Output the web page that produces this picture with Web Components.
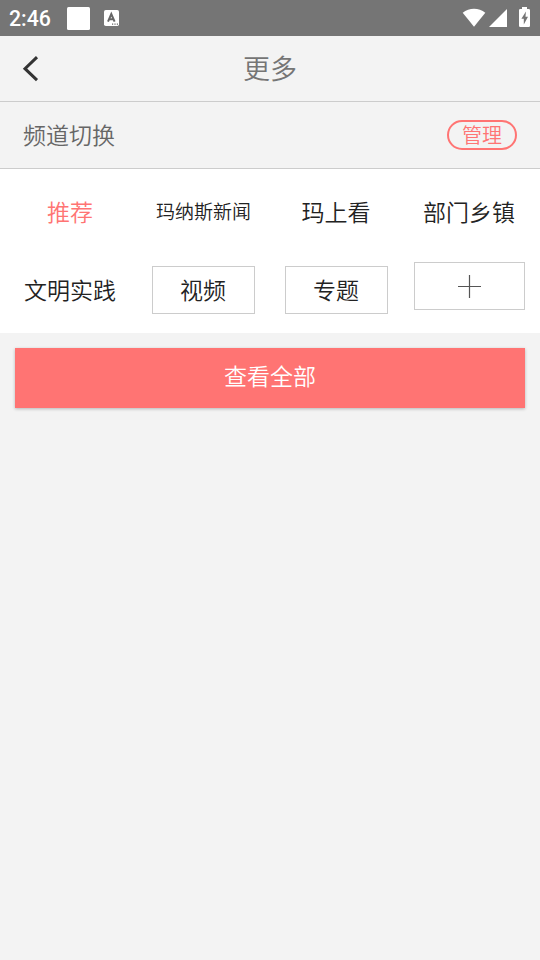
<!DOCTYPE html>
<html lang="zh-CN">
<head>
<meta charset="utf-8">
<title>更多</title>
<style>
html,body{margin:0;height:100%;background:#f3f3f3}
body{font-family:"Noto Sans CJK SC DemiLight","Noto Sans CJK SC",sans-serif;font-weight:350;overflow:hidden}
</style>
</head>
<body>
<more-page></more-page>
<script>
const define = (name, markup) => {
  const template = document.createElement('template');
  template.innerHTML = '<style>*{box-sizing:border-box}:host{box-sizing:border-box}</style>' + markup;
  customElements.define(name, class extends HTMLElement {
    constructor() {
      super();
      this.attachShadow({ mode: 'open' }).appendChild(template.content.cloneNode(true));
    }
  });
};

define('status-bar', `
<style>
:host{display:flex;align-items:center;height:36px;background:#757575;color:#fff;padding:0 9px}
.time{font:500 21.3px/36px Roboto,sans-serif;width:58px;padding-top:1px;white-space:nowrap}
svg{display:block;flex:none}
.note{margin-left:14px}
.wifi{margin-left:auto}
.signal{margin-left:3px}
.battery{margin:0 1px 2px 12px}
</style>
<span class="time">2:46</span>
<svg width="23" height="23" viewBox="0 0 23 23"><rect width="23" height="23" rx="1.5" fill="#fff"/></svg>
<svg class="note" width="15" height="16" viewBox="0 0 15 16"><rect width="15" height="16" rx="1.8" fill="#fff"/><path d="M4 11.6 7.3 4l3.3 7.6M5.3 9.2h4" fill="none" stroke="#666" stroke-width="2"/><path d="M8 14.2h1.2M10.4 14.2h1.2M12.8 14.2H14" stroke="#666" stroke-width="1.3"/></svg>
<svg class="wifi" width="24" height="20" viewBox="0 0 24 20"><path d="M.7 4.8C7.2-.6 16.8-.6 23.3 4.8L12 18.7Z" fill="#fff"/></svg>
<svg class="signal" width="18" height="18" viewBox="0 0 18 18"><path d="M18 0V18H0Z" fill="#fff"/></svg>
<svg class="battery" width="11" height="20" viewBox="0 0 11 20"><path d="M3 0H8V2H9.7Q11 2 11 3.3V18.7Q11 20 9.7 20H1.3Q0 20 0 18.7V3.3Q0 2 1.3 2H3Z" fill="#fff"/><path d="M6.9 4.5 2.4 11.8H4.8V17.5L9 9.8H6.5Z" fill="#757575"/></svg>`);

define('nav-bar', `
<style>
:host{display:grid;grid-template-columns:60px 1fr 60px;align-items:center;height:66px;border-bottom:1px solid #ccc;color:#757575}
svg{display:block;margin-left:22px}
.title{text-align:center;font-size:27px;line-height:40px;padding-bottom:2px}
</style>
<svg width="18" height="26" viewBox="0 0 18 26"><path d="M15 1.2 3 12.7 15 24.2" fill="none" stroke="#333" stroke-width="3"/></svg>
<span class="title"><slot></slot></span>`);

define('section-bar', `
<style>
:host{display:flex;align-items:center;justify-content:space-between;height:67px;border-bottom:1px solid #ccc;padding:0 23px;color:#666;font-size:23px;line-height:34px}
.label{padding-bottom:2px}
</style>
<span class="label"><slot></slot></span><slot name="action"></slot>`);

define('pill-button', `
<style>
:host{display:flex;align-items:center;justify-content:center;width:70px;height:30px;border:2px solid #ff7473;border-radius:15px;color:#ff7473;font-size:20px;line-height:26px;margin-bottom:1px}
</style><slot></slot>`);

define('channel-grid', `
<style>
:host{display:grid;grid-template-columns:repeat(4,133px);grid-template-rows:78px 78px;padding:4px 0 4px 4px;height:164px;background:#fff;align-items:center;justify-items:center;justify-content:start}
</style><slot></slot>`);

define('channel-item', `
<style>
:host{display:flex;align-items:center;justify-content:center;width:103px;height:48px;border:1px solid transparent;color:#222;font-size:23px;line-height:34px;white-space:nowrap;padding:0 1px 2px 0}
:host([active]){color:#ff7473}
:host([small]){font-size:19px;padding-right:0}
:host([boxed]){border-color:#ccc}
:host([add]){width:111px;border-color:#ccc;margin-bottom:8px;padding:0}
svg{display:block}
</style><slot></slot>`);

define('plus-icon', `
<style>:host{display:block}svg{display:block}</style>
<svg width="23" height="23" viewBox="0 0 23 23"><path d="M11.5 0V23M0 11.5H23" stroke="#555" stroke-width="1.2"/></svg>`);

define('wide-button', `
<style>
:host{display:flex;align-items:center;justify-content:center;height:60px;margin:15px;background:#ff7473;color:#fff;font-size:23px;line-height:34px;padding-bottom:6px;box-shadow:0 1px 3px rgba(0,0,0,.25)}
</style><slot></slot>`);

define('more-page', `
<style>:host{display:flex;flex-direction:column;height:960px;width:540px;background:#f3f3f3}</style>
<status-bar></status-bar>
<nav-bar>更多</nav-bar>
<section-bar>频道切换<pill-button slot="action">管理</pill-button></section-bar>
<channel-grid>
<channel-item active>推荐</channel-item>
<channel-item small>玛纳斯新闻</channel-item>
<channel-item>玛上看</channel-item>
<channel-item>部门乡镇</channel-item>
<channel-item>文明实践</channel-item>
<channel-item boxed>视频</channel-item>
<channel-item boxed>专题</channel-item>
<channel-item add><plus-icon></plus-icon></channel-item>
</channel-grid>
<wide-button>查看全部</wide-button>`);
</script>
</body>
</html>
